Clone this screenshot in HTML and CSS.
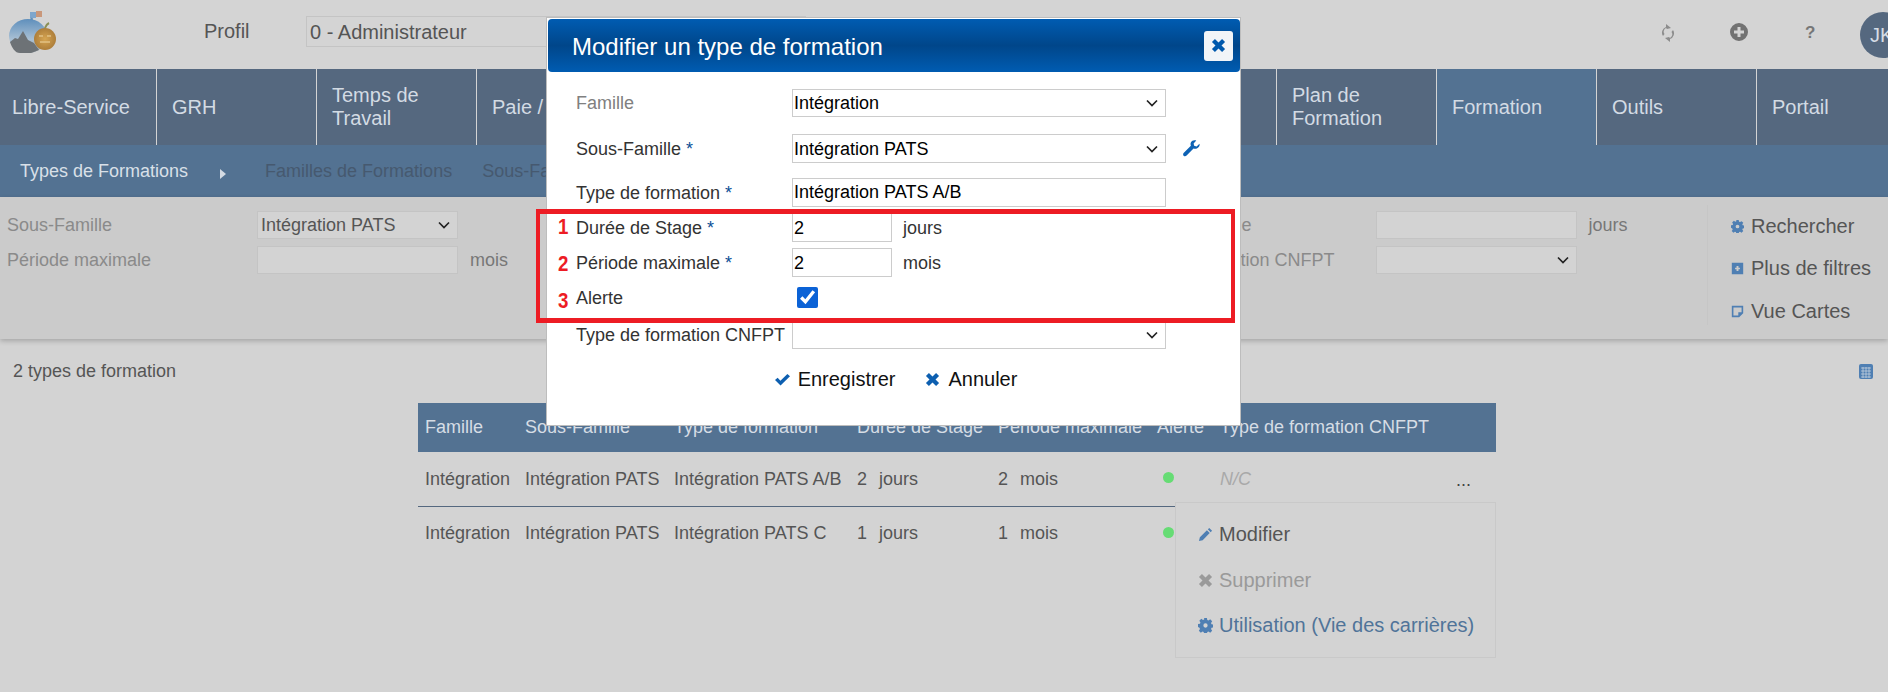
FILE: index.html
```html
<!DOCTYPE html>
<html lang="fr">
<head>
<meta charset="utf-8">
<title>Types de formation</title>
<link rel="stylesheet" href="styles.css">
</head>
<body>
<svg class="defs" width="0" height="0" aria-hidden="true">
  <defs>
    <symbol id="gear" viewBox="0 0 16 16">
      <path fill-rule="evenodd" d="M6.500 0h3l.4 2.100 1.300.5 1.800-1.200 2.100 2.100-1.200 1.800.5 1.300 2.100.4v3l-2.100.4-.5 1.300 1.200 1.800-2.100 2.100-1.800-1.200-1.300.5-.4 2.100h-3l-.4-2.100-1.300-.5-1.800 1.200-2.100-2.100 1.200-1.800-.5-1.300L0 9.500v-3l2.100-.4.500-1.300L1.400 3l2.100-2.100 1.800 1.200 1.300-.5zM8 5.700a2.300 2.300 0 1 0 0 4.600 2.300 2.300 0 0 0 0-4.600z"/>
    </symbol>
    <symbol id="times" viewBox="0 0 16 16">
      <path d="M4.200 1 8 4.800 11.800 1 15 4.200 11.200 8 15 11.800 11.800 15 8 11.200 4.200 15 1 11.800 4.800 8 1 4.200z"/>
    </symbol>
    <symbol id="check" viewBox="0 0 16 16">
      <path d="M0 8.500 2.800 6l3 3.200L13.200 2 16 4.500 5.900 14.500z"/>
    </symbol>
  </defs>
</svg>

<header class="topbar">
  <svg class="logo" viewBox="0 0 48 44" aria-hidden="true">
    <defs>
      <linearGradient id="ball" x1="0" y1="0" x2="0" y2="1">
        <stop offset="0" stop-color="#5f8fbc"/>
        <stop offset=".6" stop-color="#a9c0d4"/>
        <stop offset="1" stop-color="#9aa3ab"/>
      </linearGradient>
      <radialGradient id="pumpkin" cx=".5" cy=".5" r=".55">
        <stop offset="0" stop-color="#d6a552"/>
        <stop offset="1" stop-color="#a97a38"/>
      </radialGradient>
    </defs>
    <rect x="21" y="2" width="6" height="6" fill="#7fa6cc"/>
    <rect x="27" y="1" width="6" height="6" fill="#c9977a"/>
    <path d="M23 8 21 14" stroke="#5f8fbc" stroke-width="2.500"/>
    <ellipse cx="19" cy="26" rx="19" ry="17" fill="url(#ball)"/>
    <path d="M1 32 6 28l3 1 5-8 5 9 6 3 5 7-8 3H11C6 43 3 38 1 32z" fill="#6d7276"/>
    <ellipse cx="36" cy="29" rx="11" ry="11" fill="url(#pumpkin)"/>
    <path d="M36 18c1-3 2-4 4-5" stroke="#8a8f55" stroke-width="2" fill="none"/>
    <path d="M30 26h4M38 26h4M31 32h10" stroke="#e2c184" stroke-width="1.500"/>
  </svg>
  <span class="profil-label">Profil</span>
  <select class="profil-select"><option>0 - Administrateur</option></select>
  <div class="top-actions">
    <svg class="top-icon top-sync" viewBox="0 0 16 22" aria-hidden="true"><path d="M3 14a6 6 0 0 1 3-9V2l5 4-4 1-1-1a4 4 0 0 0-1.500 6zM13 8a6 6 0 0 1-3 9v3l-5-4 4-1 1 1a4 4 0 0 0 1.500-6z"/></svg>
    <svg class="top-icon top-plus" viewBox="0 0 18 18" aria-hidden="true"><path fill-rule="evenodd" d="M9 0a9 9 0 1 1 0 18A9 9 0 0 1 9 0zM7.500 4v3.500H4v3h3.500V14h3v-3.500H14v-3h-3.500V4z"/></svg>
    <span class="top-help">?</span>
    <span class="avatar">JK</span>
  </div>
</header>

<nav class="mainnav">
  <a class="nav-item">Libre-Service</a>
  <a class="nav-item">GRH</a>
  <a class="nav-item">Temps de<br>Travail</a>
  <a class="nav-item">Paie / DSN</a>
  <a class="nav-item">Budget</a>
  <a class="nav-item">Social</a>
  <a class="nav-item">Santé</a>
  <a class="nav-item">Emplois</a>
  <a class="nav-item">Plan de<br>Formation</a>
  <a class="nav-item is-active">Formation</a>
  <a class="nav-item">Outils</a>
  <a class="nav-item">Portail</a>
</nav>

<nav class="subnav">
  <a class="sub-current">Types de Formations</a>
  <span class="sub-arrow"></span>
  <a class="sub-link">Familles de Formations</a>
  <a class="sub-link">Sous-Familles de Formations</a>
</nav>

<section class="filters">
  <div class="filter-grid">
    <span class="f-label">Sous-Famille</span>
    <select class="f-control"><option>Intégration PATS</option></select>
    <span class="f-unit"></span>
    <span class="f-label">Type de formation</span>
    <input class="f-control" type="text">
    <span class="f-unit"></span>
    <span class="f-label">Durée de Stage</span>
    <input class="f-control" type="text">
    <span class="f-unit">jours</span>
    <span class="f-label">Période maximale</span>
    <input class="f-control" type="text">
    <span class="f-unit">mois</span>
    <span class="f-label">Alerte</span>
    <select class="f-control"><option></option></select>
    <span class="f-unit"></span>
    <span class="f-label">Type de formation CNFPT</span>
    <select class="f-control"><option></option></select>
    <span class="f-unit"></span>
  </div>
  <div class="filter-actions">
    <a class="f-action"><svg class="ic"><use href="#gear"/></svg>Rechercher</a>
    <a class="f-action"><svg class="ic" viewBox="0 0 16 16"><path fill-rule="evenodd" d="M1 1h14v14H1zM6.800 5v2H5v2h1.800v2h2.400V9H11V7H9.200V5z"/></svg>Plus de filtres</a>
    <a class="f-action"><svg class="ic" viewBox="0 0 16 16"><path fill-rule="evenodd" d="M1 1h14v9l-5 5H1zM3 3v10h6V9h4V3z"/></svg>Vue Cartes</a>
  </div>
</section>

<section class="results">
  <div class="results-head">
    <span>2 types de formation</span>
    <svg class="grid-icon" viewBox="0 0 14 15" aria-hidden="true"><rect x="0" y="0" width="14" height="15" rx="2"/><path d="M2 4h10M2 7h10M2 10h10M2 13h10M4 3v11M7 3v11M10 3v11" stroke="#cfd8e2" stroke-width=".7"/></svg>
  </div>
  <table class="data">
    <colgroup>
      <col class="c1"><col class="c2"><col class="c3"><col class="c4"><col class="c5"><col class="c6"><col class="c7">
    </colgroup>
    <thead>
      <tr><th>Famille</th><th>Sous-Famille</th><th>Type de formation</th><th>Durée de Stage</th><th>Période maximale</th><th>Alerte</th><th>Type de formation CNFPT</th></tr>
    </thead>
    <tbody>
      <tr><td>Intégration</td><td>Intégration PATS</td><td>Intégration PATS A/B</td><td class="qty">2&nbsp; jours</td><td class="qty">2&nbsp; mois</td><td><i class="dot"></i></td><td class="cell-last"><em class="nc">N/C</em><span class="more">...</span></td></tr>
      <tr><td>Intégration</td><td>Intégration PATS</td><td>Intégration PATS C</td><td class="qty">1&nbsp; jours</td><td class="qty">1&nbsp; mois</td><td><i class="dot"></i></td><td></td></tr>
    </tbody>
  </table>
  <div class="row-menu">
    <a class="menu-item"><svg class="ic" viewBox="0 0 16 16"><path d="M12 1l3 3-1.500 1.500-3-3zM9.500 3.500l3 3L5 14l-4 1 1-4z"/></svg>Modifier</a>
    <a class="menu-item is-disabled"><svg class="ic"><use href="#times"/></svg>Supprimer</a>
    <a class="menu-item is-link"><svg class="ic"><use href="#gear"/></svg>Utilisation (Vie des carrières)</a>
  </div>
</section>

<div class="modal">
  <div class="modal-head">
    <h2>Modifier un type de formation</h2>
    <button class="modal-close" type="button" aria-label="Fermer"><svg class="ic-close"><use href="#times"/></svg></button>
  </div>
  <form class="modal-form">
    <div class="m-row r-famille"><label class="m-muted">Famille</label><select class="m-wide"><option>Intégration</option></select></div>
    <div class="m-row r-sous"><label>Sous-Famille <b>*</b></label><select class="m-wide"><option>Intégration PATS</option></select>
      <svg class="wrench" viewBox="0 0 16 16" aria-hidden="true"><path d="M15.500 3.500 12.800 6 10.500 5.500 10 3.200 12.500.5C10.500-.3 8.300.4 7.500 2c-.6 1.200-.5 2.400-.1 3.300L.8 12c-.9 1-.9 2.100-.2 2.800.8.800 2 .7 2.800-.1l6.500-6.700c1 .4 2.300.4 3.500-.3 1.700-.9 2.600-2.700 2.100-4.200z"/></svg>
    </div>
    <div class="m-row r-type"><label>Type de formation <b>*</b></label><input class="m-wide" type="text" value="Intégration PATS A/B"></div>
    <div class="m-row r-duree"><label>Durée de Stage <b>*</b></label><input class="m-short" type="text" value="2"><span class="m-unit">jours</span></div>
    <div class="m-row r-periode"><label>Période maximale <b>*</b></label><input class="m-short" type="text" value="2"><span class="m-unit">mois</span></div>
    <div class="m-row r-alerte"><label>Alerte</label><input class="m-check" type="checkbox" checked></div>
    <div class="m-row r-cnfpt"><label>Type de formation CNFPT</label><select class="m-wide"><option></option></select></div>
    <div class="m-buttons">
      <a class="m-btn"><svg class="ic-btn"><use href="#check"/></svg>Enregistrer</a>
      <a class="m-btn"><svg class="ic-btn"><use href="#times"/></svg>Annuler</a>
    </div>
  </form>
  <div class="annot-box">
    <span class="annot annot-1">1</span>
    <span class="annot annot-2">2</span>
    <span class="annot annot-3">3</span>
  </div>
</div>
</body>
</html>
```
FILE: styles.css
```css
* { box-sizing: border-box; }
html, body { margin: 0; padding: 0; }
body {
  width: 1888px;
  height: 692px;
  overflow: hidden;
  position: relative;
  background: #d3d3d3;
  font-family: "Liberation Sans", Arial, sans-serif;
  font-size: 18px;
  color: #555;
}
.defs { position: absolute; }
select {
  appearance: none;
  -webkit-appearance: none;
  background-image: url("data:image/svg+xml,%3Csvg xmlns='http://www.w3.org/2000/svg' width='12' height='8'%3E%3Cpath d='M1 1.500 6 6.500 11 1.500' fill='none' stroke='%23222' stroke-width='1.700'/%3E%3C/svg%3E");
  background-repeat: no-repeat;
  background-position: right 7px center;
}

/* Top bar */
.topbar {
  height: 69px;
  display: flex;
  align-items: center;
  background: #d4d4d4;
  position: relative;
}
.logo { width: 48px; height: 44px; margin: -5px 0 0 9px; flex: none; }
.profil-label { margin: -6px 0 0 147px; font-size: 20px; color: #555; width: 102px; flex: none; }
.profil-select {
  width: 500px; height: 31px; margin-top: -7px;
  font: 20px "Liberation Sans", Arial, sans-serif; color: #555;
  background-color: #d4d4d4; border: 1px solid #c4c4c4; padding: 2px 0 0 3px;
}
.top-actions { margin-left: auto; display: flex; align-items: center; height: 100%; position: relative; width: 228px; }
.top-icon { position: absolute; fill: #727272; }
.top-sync { left: 0; top: 22px; width: 16px; height: 22px; fill: #8c8c8c; }
.top-plus { left: 70px; top: 23px; width: 18px; height: 18px; }
.top-help { position: absolute; left: 145px; top: 23px; font-size: 17px; font-weight: bold; color: #777; }
.avatar {
  position: absolute; left: 200px; top: 12px; width: 46px; height: 46px; border-radius: 50%;
  background: #55687f; color: #d5dde6; font-size: 20px; line-height: 46px; padding-left: 10px;
}

/* Main nav */
.mainnav { display: flex; height: 76px; background: #55687f; }
.nav-item {
  flex: 0 0 160px;
  display: flex; align-items: center;
  padding-left: 15px;
  border-left: 1px solid #d4d4d4;
  color: #d3dbe4;
  font-size: 20px; line-height: 23px;
}
.nav-item:first-child { flex-basis: 156px; padding-left: 12px; border-left: 0; }
.nav-item.is-active { background: #537292; }

/* Sub nav */
.subnav { height: 52px; background: #537292; display: flex; align-items: center; font-size: 18px; position: relative; }
.sub-current { margin-left: 20px; color: #d9e0e8; }
.sub-arrow {
  margin: 6px 0 0 32px;
  border-left: 6px solid #d4dbe3; border-top: 5px solid transparent; border-bottom: 5px solid transparent;
}
.sub-link { margin-left: 39px; color: #46596f; }
.sub-link + .sub-link { margin-left: 30px; }

/* Filters */
.filters {
  height: 142px;
  background: #cbcbcb;
  box-shadow: 0 2px 5px rgba(0,0,0,.22);
  position: relative;
  display: flex;
}
.filter-grid {
  width: 1707px;
  padding: 14px 0 0 7px;
  display: grid;
  grid-template-columns: repeat(3, 250px 201px 108.250px);
  grid-auto-rows: 28px;
  row-gap: 7px;
  align-items: center;
  align-content: start;
}
.f-label { color: #8a8a8a; white-space: nowrap; }
.f-control {
  height: 28px; width: 201px;
  background-color: #d3d3d3; border: 1px solid #c4c4c4;
  font: 18px "Liberation Sans", Arial, sans-serif; color: #555; padding: 0 0 0 3px;
}
.f-unit { padding-left: 12px; color: #777; }
.filter-actions {
  flex: 1;
  margin: 8px 0 14px;
  border-left: 1px solid #c6c6c6;
  padding: 0 0 0 23px;
  display: flex; flex-direction: column;
}
.f-action { flex: none; height: 42.500px; display: flex; align-items: center; font-size: 20px; color: #555; white-space: nowrap; }
.ic { width: 13px; height: 13px; margin-right: 7px; fill: #4f7fb3; flex: none; }

/* Results */
.results { position: relative; }
.results-head {
  height: 64px; padding: 0 15px 0 13px;
  display: flex; align-items: center; justify-content: space-between;
  font-size: 18px; color: #555;
}
.grid-icon { width: 14px; height: 15px; fill: #4f7fb3; }
.data { width: 1078px; margin-left: 418px; border-collapse: collapse; table-layout: fixed; font-size: 18px; }
.c1 { width: 100px; } .c2 { width: 149px; } .c3 { width: 183px; } .c4 { width: 141px; }
.c5 { width: 159px; } .c6 { width: 63px; } .c7 { width: 283px; }
.data th {
  height: 49px; background: #537292; color: #d6dde5; font-weight: normal; text-align: left; padding: 0 0 0 7px; white-space: nowrap;
}
.data td { height: 54px; padding: 1px 0 0 7px; color: #555; white-space: nowrap; }
.data td.qty { word-spacing: 1px; }
.data tbody tr:first-child td { border-bottom: 1px solid #55687f; }
.dot { display: block; width: 11px; height: 11px; border-radius: 50%; background: #66dc74; margin: -3px 0 0 6px; }
.cell-last { position: relative; }
.nc { color: #a9a9a9; }
.more { position: absolute; left: 243px; top: 18px; color: #444; }

.row-menu {
  position: absolute; left: 1175px; top: 163px; width: 321px; height: 156px;
  background: #d3d3d3; border: 1px solid #c9c9c9;
  padding: 9px 0 0 22px;
  display: flex; flex-direction: column;
}
.menu-item { flex: none; height: 45.500px; display: flex; align-items: center; font-size: 20px; color: #555; white-space: nowrap; }
.menu-item .ic { width: 15px; height: 15px; margin-right: 6px; }
.menu-item.is-disabled { color: #9a9a9a; }
.menu-item.is-disabled .ic { fill: #9a9a9a; }
.menu-item.is-link { color: #507499; }

/* Modal */
.modal {
  position: absolute; left: 546px; top: 17px; width: 695px; height: 409px;
  background: #fff; border: 1px solid #bdbdbd;
}
.modal-head {
  height: 53px;
  margin: 1px 0 0 1px;
  border-radius: 4px;
  background: linear-gradient(#005cb2 0%, #00468a 50%, #005cb2 100%);
  display: flex; align-items: center; justify-content: space-between;
  padding: 0 7px 0 24px;
}
.modal-head h2 { margin: 2px 0 0; color: #fff; font-size: 24px; font-weight: normal; }
.modal-close {
  width: 29px; height: 30px; padding: 0; border: 0; border-radius: 3px; background: #f2f5f8;
  display: flex; align-items: center; justify-content: center;
}
.ic-close { width: 15px; height: 15px; fill: #0059ad; }

.modal-form { padding: 17px 0 0 29px; }
.m-row { display: flex; align-items: center; height: 29px; font-size: 18px; }
.m-row label { width: 216px; flex: none; color: #333; white-space: nowrap; padding-top: 1px; }
.m-row label b { font-weight: normal; color: #0b4f96; }
.m-row .m-muted { color: #808080; }
.m-wide {
  width: 374px; height: 29px; border: 1px solid #ccc; background-color: #fff;
  font: 18px "Liberation Sans", Arial, sans-serif; color: #000; padding: 0 0 0 1px;
}
.m-short {
  width: 100px; height: 29px; border: 1px solid #ccc; background: #fff;
  font: 18px "Liberation Sans", Arial, sans-serif; color: #000; padding: 1px 0 0 1px;
}
.m-unit { margin-left: 11px; color: #333; padding-top: 1px; }
.m-check { width: 21px; height: 21px; margin: 0 0 0 5px; accent-color: #0b62d6; }
.r-famille { height: 28px; } .r-famille .m-wide { height: 28px; }
.r-sous { margin-top: 17px; }
.r-type { margin-top: 15px; }
.r-duree { margin-top: 6px; }
.r-periode { margin-top: 6px; }
.r-alerte { margin-top: 6px; height: 29px; }
.r-cnfpt { margin-top: 8px; }
.wrench { width: 17px; height: 17px; margin-left: 17px; fill: #0d62b5; }
.m-buttons { display: flex; justify-content: center; gap: 30px; margin-top: 19px; padding-right: 24px; }
.m-btn { display: flex; align-items: center; font-size: 20px; color: #111; }
.ic-btn { width: 15px; height: 15px; margin-right: 8px; fill: #0d5fb0; flex: none; }

/* Red annotation */
.annot-box {
  position: absolute; left: -11px; top: 191px; width: 699px; height: 114px;
  border: solid #ed1c24; border-width: 5px 4px;
}
.annot { position: absolute; left: 17px; color: #ed1c24; font-size: 22px; font-weight: bold; line-height: 24px; transform: scaleX(.85); }
.annot-1 { top: 1px; }
.annot-2 { top: 38px; }
.annot-3 { top: 75px; }
```
